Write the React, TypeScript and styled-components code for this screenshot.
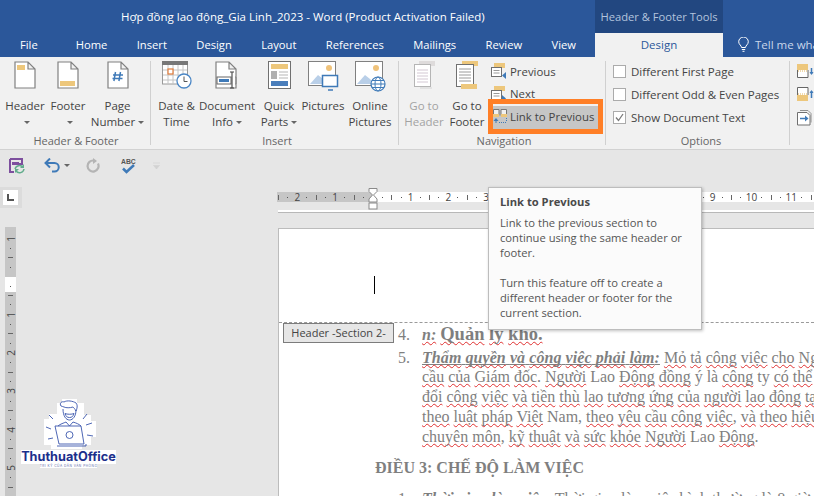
import React from "react";
import styled, { createGlobalStyle } from "styled-components";

const UI_FONT = `"Open Sans", "Noto Sans", sans-serif`;
const DOC_FONT = `"Liberation Serif", serif`;

const GlobalStyle = createGlobalStyle`
  html, body {
    margin: 0;
    padding: 0;
    background: #e6e6e6;
  }
`;

const Window = styled.div`
  position: relative;
  width: 814px;
  height: 496px;
  overflow: hidden;
  display: flex;
  flex-direction: column;
  background: #e6e6e6;
  font-family: ${UI_FONT};
  font-size: 11.5px;
  color: #444;
`;

/* ---------- title + tabs ---------- */

const TitleBar = styled.div`
  height: 33px;
  display: flex;
  background: #2b579a;
  flex: none;
`;

const Title = styled.div`
  width: 595px;
  flex: none;
  padding-left: 121px;
  box-sizing: border-box;
  line-height: 34px;
  color: #fff;
  font-size: 11.5px;
  white-space: nowrap;
`;

const ContextLabel = styled.div`
  width: 128px;
  flex: none;
  background: #224780;
  color: #b3c4dd;
  font-size: 11.2px;
  line-height: 34px;
  text-align: center;
  white-space: nowrap;
`;

const TabBar = styled.div`
  height: 24px;
  flex: none;
  display: flex;
  background: #2b579a;
  padding-left: 20px;
`;

const Tab = styled.div<{ $gap: number }>`
  margin-left: ${(p) => p.$gap}px;
  color: #fff;
  font-size: 11.2px;
  line-height: 23px;
  white-space: nowrap;
`;

const ActiveTab = styled.div`
  width: 128px;
  flex: none;
  margin-left: 19px;
  background: #f1f1f1;
  color: #2b579a;
  font-size: 11.5px;
  line-height: 24px;
  text-align: center;
`;

const TellMe = styled.div`
  margin-left: 15px;
  display: flex;
  align-items: center;
  gap: 6px;
  color: #c9d6ea;
  font-size: 11.5px;
  white-space: nowrap;
  padding-bottom: 2px;
`;

/* ---------- ribbon ---------- */

const Ribbon = styled.div`
  height: 92px;
  flex: none;
  display: flex;
  background: #f1f1f1;
  border-bottom: 1px solid #d2d2d2;
`;

const Group = styled.div<{ $width: number; $pad: number; $noRule?: boolean }>`
  width: ${(p) => p.$width}px;
  flex: none;
  box-sizing: border-box;
  margin-top: 4px;
  height: 84px;
  padding-left: ${(p) => p.$pad}px;
  border-right: ${(p) => (p.$noRule ? "none" : "1px solid #d0d0d0")};
  display: flex;
  flex-direction: column;
`;

const GroupBody = styled.div`
  height: 72px;
  flex: none;
  display: flex;
`;

const GroupLabel = styled.div`
  height: 12px;
  line-height: 15px;
  text-align: center;
  color: #666;
  font-size: 11px;
  white-space: nowrap;
`;

const BigButton = styled.div<{ $width: number; $disabled?: boolean }>`
  width: ${(p) => p.$width}px;
  flex: none;
  display: flex;
  flex-direction: column;
  align-items: center;
  color: ${(p) => (p.$disabled ? "#a3a3a3" : "#444")};
  font-size: 11.5px;
  line-height: 16px;
  white-space: nowrap;
`;

const BigIcon = styled.div`
  height: 37px;
  display: flex;
  align-items: flex-start;
  justify-content: center;
`;

const Caret = styled.span`
  display: inline-block;
  width: 0;
  height: 0;
  margin-left: 3px;
  vertical-align: 2px;
  border-left: 3px solid transparent;
  border-right: 3px solid transparent;
  border-top: 3px solid #666;
`;

const SmallColumn = styled.div`
  display: flex;
  flex-direction: column;
  margin-left: 4px;
  width: 105px;
`;

const SmallRow = styled.div<{ $active?: boolean }>`
  position: relative;
  height: 22.5px;
  box-sizing: border-box;
  padding-bottom: 2px;
  display: flex;
  align-items: center;
  gap: 3px;
  background: ${(p) => (p.$active ? "#c6c6c6" : "transparent")};
  font-size: 11.4px;
  white-space: nowrap;
  ${(p) =>
    p.$active &&
    `&::after {
      content: "";
      position: absolute;
      inset: -7px -5px -5px -5px;
      border: 5px solid #ff7f27;
      pointer-events: none;
    }`}
`;

const NavIconSlot = styled.span`
  display: flex;
  margin-left: -2px;
`;

const OptionRow = styled.div`
  height: 23px;
  box-sizing: border-box;
  padding-bottom: 2px;
  display: flex;
  align-items: center;
  gap: 5px;
  font-size: 11.5px;
  white-space: nowrap;
`;

const Checkbox = styled.span`
  width: 11px;
  height: 11px;
  flex: none;
  background: #fff;
  border: 1px solid #ababab;
  display: flex;
  align-items: center;
  justify-content: center;
`;

const IconStack = styled.div`
  display: flex;
  flex-direction: column;
  gap: 8px;
  padding-top: 3px;
`;

/* ---------- quick access ---------- */

const QuickBar = styled.div`
  height: 33px;
  flex: none;
  display: flex;
  align-items: center;
  padding-left: 9px;
  box-sizing: border-box;
  padding-bottom: 2px;
`;

const QuickItem = styled.div<{ $gap: number }>`
  margin-left: ${(p) => p.$gap}px;
  display: flex;
  align-items: center;
`;

/* ---------- workspace ---------- */

const Workspace = styled.div`
  flex: 1;
  min-height: 0;
  display: flex;
`;

const LeftRail = styled.div`
  width: 277px;
  flex: none;
  display: flex;
  flex-direction: column;
  padding-top: 4px;
  box-sizing: border-box;
`;

const CornerBox = styled.div`
  width: 22px;
  height: 21px;
  box-sizing: border-box;
  padding: 3px 4px 3px 3px;
  background: #dcdcdc;
`;

const CornerInner = styled.div`
  height: 100%;
  background: #fff;
  display: flex;
  align-items: center;
  justify-content: center;
`;

const VRuler = styled.div`
  margin: 19px 0 0 5px;
  width: 11px;
  flex: 1;
  overflow: hidden;
  padding-top: 6.6px;
  box-sizing: border-box;
  background: linear-gradient(
    to bottom,
    #c6c6c6 50px,
    #fff 50px,
    #fff 65px,
    #c6c6c6 65px
  );
  display: flex;
  flex-direction: column;
`;

const VMark = styled.div`
  flex: 0 0 9.45px;
  display: flex;
  align-items: center;
  justify-content: center;
  font-size: 10px;
  color: #444;
`;

const VNumber = styled.span`
  transform: rotate(-90deg);
  line-height: 10px;
`;

const DocColumn = styled.div`
  flex: 1;
  min-width: 0;
  display: flex;
  flex-direction: column;
`;

const RulerWrap = styled.div`
  position: relative;
  margin-top: 9px;
  height: 10px;
  flex: none;
`;

const HRuler = styled.div`
  height: 10px;
  overflow: hidden;
  display: flex;
  background: linear-gradient(to right, #c6c6c6 96px, #fff 96px);
`;

const HMark = styled.div<{ $first?: boolean }>`
  flex: 0 0 9.45px;
  margin-left: ${(p) => (p.$first ? "-3.2px" : "0")};
  display: flex;
  align-items: center;
  justify-content: center;
  font-size: 10px;
  line-height: 10px;
  color: #444;
`;

const Dot = styled.i`
  display: block;
  width: 1px;
  height: 1px;
  background: #555;
`;

const HLine = styled.i`
  display: block;
  width: 1px;
  height: 5px;
  background: #666;
`;

const VLine = styled.i`
  display: block;
  width: 5px;
  height: 1px;
  background: #666;
`;

const IndentMarker = styled.svg`
  position: absolute;
  left: 91px;
  top: -4px;
`;

const PrevPageEdge = styled.div`
  margin: 8px 0 0 1px;
  height: 3px;
  flex: none;
  background: #fff;
  border-bottom: 1px solid #b8b8b8;
  box-sizing: border-box;
`;

const Page = styled.div`
  position: relative;
  margin: 15px 0 0 1px;
  flex: 1;
  min-height: 0;
  overflow: hidden;
  background: #fff;
  border-top: 1px solid #bcbcbc;
  border-left: 1px solid #bcbcbc;
`;

const HeaderZone = styled.div`
  height: 94px;
  box-sizing: border-box;
  padding: 47px 0 0 95px;
  border-bottom: 1px dashed #9a9a9a;
`;

const TextCursor = styled.div`
  width: 1px;
  height: 18px;
  background: #000;
`;

const HeaderTag = styled.div`
  position: absolute;
  left: 4px;
  top: 94px;
  width: 111px;
  height: 20px;
  box-sizing: border-box;
  border: 1px solid #7c7c7c;
  background: #e6e6e6;
  color: #444;
  font-size: 11px;
  line-height: 18px;
  text-align: center;
  white-space: nowrap;
`;

const Body = styled.div`
  font-family: ${DOC_FONT};
  color: #7f7f7f;
  font-size: 16px;
  line-height: 19.7px;
  white-space: nowrap;
`;

const ListRow = styled.div<{ $top?: number }>`
  display: flex;
  margin: ${(p) => p.$top ?? 0}px 0 0 119px;
`;

const ListNum = styled.div`
  width: 24px;
  flex: none;
`;

const Wavy = styled.span`
  text-decoration: underline wavy #e03030;
  text-decoration-thickness: 1px;
  text-underline-offset: 1px;
  text-decoration-skip-ink: none;
`;

const Lead = styled.span`
  font-weight: bold;
  font-style: italic;
  letter-spacing: 0.07px;
  text-decoration: underline;
`;

const PlainLead = styled.span`
  font-weight: bold;
  font-style: italic;
`;

const LargeBold = styled.span`
  font-weight: bold;
  font-size: 18.5px;
`;

const BodyLine = styled.div`
  margin-left: 143px;
`;

const Heading = styled.div`
  margin: 12px 0 0 96px;
  font-weight: bold;
  font-size: 16px;
`;

/* ---------- overlays ---------- */

const Tooltip = styled.div`
  position: absolute;
  left: 488px;
  top: 187px;
  width: 214px;
  height: 143px;
  box-sizing: border-box;
  padding: 6px 10px 0 11px;
  background: #fbfbfb;
  border: 1px solid #bdbdbd;
  box-shadow: 1px 1px 3px rgba(0, 0, 0, 0.25);
  color: #555;
  font-size: 11.2px;
  line-height: 15px;
`;

const TipTitle = styled.div`
  font-weight: bold;
  margin-bottom: 6px;
  color: #4a4a4a;
`;

const TipText = styled.p`
  margin: 0 0 15px;
`;

const Watermark = styled.div`
  position: absolute;
  left: 21px;
  top: 399px;
  width: 95px;
  display: flex;
  flex-direction: column;
  align-items: center;
`;

const BrandName = styled.div`
  background: #fff;
  color: #1c2f8c;
  font-family: "Inter", sans-serif;
  font-weight: 700;
  font-size: 12.7px;
  line-height: 13px;
  padding: 0 0 1px;
  margin-top: 1px;
  white-space: nowrap;
`;

const BrandTag = styled.div`
  background: #fff;
  color: #5b6aa8;
  font-family: "Inter", sans-serif;
  font-size: 3.2px;
  line-height: 4px;
  letter-spacing: 0.5px;
  white-space: nowrap;
`;

/* ---------- icons ---------- */

const PageOutline = () => (
  <path d="M1 1h13l7 7v19H1z M14 1v7h7" fill="#fff" stroke="#808080" strokeWidth="1.2" />
);

const HeaderIcon = () => (
  <svg width="22" height="28" viewBox="0 0 22 28">
    <PageOutline />
    <rect x="3" y="4" width="8" height="5" fill="#edc77c" />
  </svg>
);

const FooterIcon = () => (
  <svg width="22" height="28" viewBox="0 0 22 28">
    <PageOutline />
    <rect x="3" y="20" width="15" height="5" fill="#edc77c" />
  </svg>
);

const PageNumberIcon = () => (
  <svg width="22" height="28" viewBox="0 0 22 28">
    <PageOutline />
    <path d="M8.5 11l-1.6 9M13.5 11l-1.6 9M6 14h10M5.500 17.500h10" stroke="#3f7ab8" strokeWidth="1.500" fill="none" />
  </svg>
);

const DateIcon = () => (
  <svg width="30" height="30" viewBox="0 0 30 30">
    <rect x="0.500" y="1" width="25" height="22" fill="#fff" stroke="#9a9a9a" />
    <rect x="0" y="0" width="26" height="4" fill="#777" />
    <path d="M1 9h24M1 14h24M1 19h24M6 4v19M11 4v19M16 4v19M21 4v19" stroke="#c4c4c4" />
    <rect x="6" y="8" width="5" height="5" fill="#fff" stroke="#e07b39" strokeWidth="1.200" />
    <circle cx="22" cy="20" r="7" fill="#fff" stroke="#4a86c5" strokeWidth="1.300" />
    <path d="M22 15.500V20.500h3.500" stroke="#555" fill="none" />
  </svg>
);

const DocInfoIcon = () => (
  <svg width="24" height="28" viewBox="0 0 24 28">
    <PageOutline />
    <rect x="2" y="16" width="14" height="7" fill="#fff" stroke="#666" />
    <rect x="4" y="18" width="10" height="3" fill="#3f7ab8" />
    <path d="M15 11h4M15 27h4M17 11v16" stroke="#444" strokeWidth="1.100" fill="none" />
    <path d="M20 16h1v7h-1" stroke="#888" fill="none" />
  </svg>
);

const QuickPartsIcon = () => (
  <svg width="23" height="28" viewBox="0 0 23 28">
    <rect x="0.500" y="0.500" width="22" height="27" fill="#fff" stroke="#707070" />
    <rect x="3" y="3" width="17" height="5" fill="#edc77c" />
    <rect x="3" y="10" width="6" height="8" fill="#b0b0b0" />
    <path d="M11 11h9M11 14h9M11 17h9" stroke="#b5b5b5" />
    <rect x="3" y="20" width="17" height="5" fill="#4a7ebb" />
  </svg>
);

const PictureBase = () => (
  <>
    <rect x="0.500" y="0.500" width="27" height="24" fill="#fff" stroke="#808080" />
    <circle cx="21" cy="7" r="3" fill="#efc27a" />
    <path d="M2 23l8-9 5 4 5 5z" fill="#b9cfe8" />
  </>
);

const PicturesIcon = () => (
  <svg width="31" height="32" viewBox="0 0 31 32">
    <PictureBase />
    <rect x="14.500" y="14.500" width="15" height="11" fill="#fff" stroke="#3f7ab8" strokeWidth="1.500" />
    <path d="M20 29h5" stroke="#3f7ab8" strokeWidth="1.500" />
  </svg>
);

const OnlinePicturesIcon = () => (
  <svg width="31" height="32" viewBox="0 0 31 32">
    <PictureBase />
    <circle cx="23" cy="23" r="7" fill="#fff" stroke="#3f7ab8" strokeWidth="1.200" />
    <ellipse cx="23" cy="23" rx="3" ry="7" fill="none" stroke="#3f7ab8" />
    <path d="M16 23h14M17 19.500h12M17 26.500h12" stroke="#3f7ab8" />
  </svg>
);

const GoToHeaderIcon = () => (
  <svg width="24" height="29" viewBox="0 0 24 29">
    <rect x="7" y="0" width="16" height="5" fill="#dedbdb" />
    <rect x="2.500" y="3.500" width="16" height="22" fill="#fff" stroke="#b5b5b5" />
    <path d="M5 9h11M5 12h11M5 15h11M5 18h11M5 21h11" stroke="#d3c8d3" />
    <rect x="8" y="26" width="12" height="2" fill="#e2e2e2" />
  </svg>
);

const GoToFooterIcon = () => (
  <svg width="24" height="29" viewBox="0 0 24 29">
    <rect x="7" y="0" width="16" height="5" fill="#edc77c" />
    <rect x="1.500" y="3.500" width="17" height="22" fill="#fff" stroke="#707070" />
    <path d="M4 8h12M4 11h12M4 14h12M4 17h12M4 20h12" stroke="#9a9a9a" />
    <rect x="6" y="23" width="16" height="5" fill="#edc77c" />
  </svg>
);

const SectionNavIcon = ({ forward }: { forward?: boolean }) => (
  <svg width="16" height="16" viewBox="0 0 16 16">
    <rect x="3" y="0" width="11" height="5" fill="#edc77c" />
    <rect x="0.500" y="4.500" width="10" height="9" fill="#fff" stroke="#707070" />
    <path d="M2.500 7.500h6M2.500 10h6" stroke="#999" />
    {forward ? (
      <path d="M11 9l4 3.500-4 3.500z" fill="#3f7ab8" />
    ) : (
      <path d="M15 9v7l-4-3.500z" fill="#3f7ab8" />
    )}
  </svg>
);

const LinkIcon = () => (
  <svg width="14" height="16" viewBox="0 0 14 16">
    <path d="M0.500 1.500h5.500v6h-5.500zM8 1.500h5.500v6H8z" fill="#f1f1f1" stroke="#777" />
    <rect x="0" y="6" width="6" height="3" fill="#edc77c" />
    <rect x="8" y="6" width="6" height="3" fill="#edc77c" />
    <path d="M6 14.500h7.500M13.500 10v4" stroke="#3f7ab8" strokeDasharray="1 1" />
    <path d="M3 10l-2.500 3h5z" fill="#3f7ab8" />
    <path d="M3 12v3" stroke="#3f7ab8" />
  </svg>
);

const CheckMark = () => (
  <svg width="9" height="9" viewBox="0 0 9 9">
    <path d="M1 4.500l2.500 3L8 1" stroke="#7a7a7a" strokeWidth="1.300" fill="none" />
  </svg>
);

const EdgeHeaderIcon = ({ up }: { up?: boolean }) => (
  <svg width="17" height="15" viewBox="0 0 17 15">
    {up ? (
      <>
        <path d="M0.500 8V0.500h10.500V8" fill="#fff" stroke="#666" />
        <rect x="0" y="8" width="11" height="6" fill="#edc77c" />
        <path d="M1 7h9" stroke="#e2b55c" strokeDasharray="1 1" />
        <path d="M14.500 4v7" stroke="#3f7ab8" strokeWidth="1.500" />
        <path d="M12.500 6l2-3 2 3z" fill="#3f7ab8" />
      </>
    ) : (
      <>
        <path d="M0.500 6v7.500h10.500V6" fill="#fff" stroke="#666" />
        <rect x="0" y="0" width="11" height="6" fill="#edc77c" />
        <path d="M1 7h9" stroke="#e2b55c" strokeDasharray="1 1" />
        <path d="M14.500 4v6" stroke="#3f7ab8" strokeWidth="1.500" />
        <path d="M12.500 8l2 3 2-3z" fill="#3f7ab8" />
      </>
    )}
  </svg>
);

const CloseHeaderIcon = () => (
  <svg width="15" height="16" viewBox="0 0 15 16">
    <path d="M0.500 2.500h9.500l3 3v9.500H0.500z" fill="#fff" stroke="#707070" />
    <path d="M3 0.500h8l3 3v9" fill="none" stroke="#909090" />
    <path d="M3 8.500h6" stroke="#3f7ab8" strokeWidth="1.500" />
    <path d="M8 5.500l3.500 3-3.500 3z" fill="#3f7ab8" />
  </svg>
);

const BulbIcon = () => (
  <svg width="11" height="15" viewBox="0 0 11 15">
    <path
      d="M3.500 10.500c0-2-2.800-3-2.800-5.700a4.800 4.800 0 0 1 9.600 0c0 2.700-2.800 3.700-2.800 5.700zM3.800 12.500h3.400M4.500 14.300h2"
      fill="none"
      stroke="#fff"
    />
  </svg>
);

const SaveIcon = () => (
  <svg width="16" height="16" viewBox="0 0 16 16">
    <path d="M1 1h12v5H10M1 1v13h4" fill="none" stroke="#7d4f9e" strokeWidth="2" />
    <rect x="3" y="4" width="7" height="3" fill="#7d4f9e" />
    <path d="M6 11a4.500 4.500 0 0 1 8-1.500M15 11a4.500 4.500 0 0 1-8 2" fill="none" stroke="#62ad8c" strokeWidth="1.500" />
    <path d="M15 6v4h-4zM6 15v-4h4z" fill="#62ad8c" />
  </svg>
);

const UndoIcon = () => (
  <svg width="17" height="15" viewBox="0 0 17 15">
    <path d="M2 5h8.500a4.200 4.200 0 0 1 0 8.500H8" fill="none" stroke="#3f7ab8" strokeWidth="2" />
    <path d="M6 0.500L1.500 5 6 9.500" fill="none" stroke="#3f7ab8" strokeWidth="2" />
  </svg>
);

const RedoIcon = () => (
  <svg width="14" height="15" viewBox="0 0 14 15">
    <path d="M8 2.600a5.500 5.500 0 1 0 4 3" fill="none" stroke="#b4b4b4" strokeWidth="2.200" />
    <path d="M7 0v6l4-3z" fill="#b4b4b4" />
  </svg>
);

const SpellIcon = () => (
  <svg width="15" height="17" viewBox="0 0 15 17">
    <text x="0" y="6.500" fontFamily="Liberation Sans, sans-serif" fontWeight="700" fontSize="6.800" fill="#555">
      ABC
    </text>
    <path d="M2 11.500l3.500 3.500L13 8" fill="none" stroke="#3f7ab8" strokeWidth="2.500" />
  </svg>
);

const CustomizeIcon = () => (
  <svg width="7" height="8" viewBox="0 0 7 8">
    <path d="M0 1h7M0.500 3.500h6l-3 3.500z" fill="#d2d2d2" stroke="#d2d2d2" strokeWidth="0.600" />
  </svg>
);

const LeftTabIcon = () => (
  <svg width="7" height="7" viewBox="0 0 7 7">
    <path d="M1 0v6h6" fill="none" stroke="#555" strokeWidth="2" />
  </svg>
);

const PersonLogo = () => (
  <svg width="54" height="50" viewBox="0 0 54 50">
    <path d="M20 0h15v4h7v12h7v6h5v16h-5v8h-9v4H9v-4H2V20h5v-5h8V4h5z" fill="#fff" />
    <g fill="none" stroke="#3a56ad" strokeWidth="0.900">
      <path d="M19 7c-2-3 1-5 3-4 3-2 9-1 12 1 2 2 1 6 0 8-1-2-2-3-3-4-3 1-7 1-9 0-1 0-2-1-3-1z" />
      <path d="M21 10c0 7 3 11 6.500 11S34 17 34 11" />
      <path d="M23 14.500c2 1 7 1 9 0-1 3-2 4-4.500 4s-3.500-1-4.500-4z" />
      <path d="M16 27c2-2 6-3 8-4l3.500 4 3.500-4c3 1 6 2 8 4" />
      <path d="M13 27h26l3 18H17z" />
      <circle cx="27.500" cy="36" r="3.500" />
      <path d="M15 47h29v-2" />
      <path d="M7 16l4 4M4 28l5 2M6 40l5-1M45 15l-4 5M50 24l-6 2M51 37l-6-1" />
    </g>
  </svg>
);

/* ---------- ruler data ---------- */

type Mark = { kind: "num" | "dot" | "line" | "blank"; label?: string };

// one step per quarter centimetre
const buildMarks = (from: number, to: number): Mark[] => {
  const marks: Mark[] = [];
  for (let i = from; i <= to; i++) {
    if (i === 0) marks.push({ kind: "blank" });
    else if (i % 4 === 0) marks.push({ kind: "num", label: String(Math.abs(i) / 4) });
    else if (i % 2 === 0) marks.push({ kind: "line" });
    else marks.push({ kind: "dot" });
  }
  return marks;
};

const horizontalMarks = buildMarks(-10, 58);
const verticalMarks = buildMarks(-4, 24);

const App = () => {
  return (
    <Window>
      <GlobalStyle />
      <TitleBar>
        <Title>Hợp đồng lao động_Gia Linh_2023 - Word (Product Activation Failed)</Title>
        <ContextLabel>Header &amp; Footer Tools</ContextLabel>
      </TitleBar>
      <TabBar>
        <Tab $gap={0}>File</Tab>
        <Tab $gap={38}>Home</Tab>
        <Tab $gap={29.4}>Insert</Tab>
        <Tab $gap={29.4}>Design</Tab>
        <Tab $gap={29.4}>Layout</Tab>
        <Tab $gap={29.4}>References</Tab>
        <Tab $gap={29.4}>Mailings</Tab>
        <Tab $gap={29.4}>Review</Tab>
        <Tab $gap={29.4}>View</Tab>
        <ActiveTab>Design</ActiveTab>
        <TellMe>
          <BulbIcon />
          Tell me what you want to do
        </TellMe>
      </TabBar>

      <Ribbon>
        <Group $width={151} $pad={2}>
          <GroupBody>
            <BigButton $width={46}>
              <BigIcon><HeaderIcon /></BigIcon>
              Header
              <span><Caret /></span>
            </BigButton>
            <BigButton $width={40}>
              <BigIcon><FooterIcon /></BigIcon>
              Footer
              <span><Caret /></span>
            </BigButton>
            <BigButton $width={59}>
              <BigIcon><PageNumberIcon /></BigIcon>
              Page
              <span>Number<Caret /></span>
            </BigButton>
          </GroupBody>
          <GroupLabel>Header &amp; Footer</GroupLabel>
        </Group>

        <Group $width={248} $pad={5}>
          <GroupBody>
            <BigButton $width={41}>
              <BigIcon><DateIcon /></BigIcon>
              Date &amp;
              <span>Time</span>
            </BigButton>
            <BigButton $width={60}>
              <BigIcon><DocInfoIcon /></BigIcon>
              Document
              <span>Info<Caret /></span>
            </BigButton>
            <BigButton $width={44}>
              <BigIcon><QuickPartsIcon /></BigIcon>
              Quick
              <span>Parts<Caret /></span>
            </BigButton>
            <BigButton $width={44}>
              <BigIcon><PicturesIcon /></BigIcon>
              Pictures
            </BigButton>
            <BigButton $width={50}>
              <BigIcon><OnlinePicturesIcon /></BigIcon>
              Online
              <span>Pictures</span>
            </BigButton>
          </GroupBody>
          <GroupLabel>Insert</GroupLabel>
        </Group>

        <Group $width={207} $pad={4}>
          <GroupBody>
            <BigButton $width={42} $disabled>
              <BigIcon><GoToHeaderIcon /></BigIcon>
              Go to
              <span>Header</span>
            </BigButton>
            <BigButton $width={44}>
              <BigIcon><GoToFooterIcon /></BigIcon>
              Go to
              <span>Footer</span>
            </BigButton>
            <SmallColumn>
              <SmallRow><NavIconSlot><SectionNavIcon /></NavIconSlot>Previous</SmallRow>
              <SmallRow><NavIconSlot><SectionNavIcon forward /></NavIconSlot>Next</SmallRow>
              <SmallRow $active><LinkIcon />Link to Previous</SmallRow>
            </SmallColumn>
          </GroupBody>
          <GroupLabel>Navigation</GroupLabel>
        </Group>

        <Group $width={184} $pad={7}>
          <GroupBody>
            <div>
              <OptionRow><Checkbox />Different First Page</OptionRow>
              <OptionRow><Checkbox />Different Odd &amp; Even Pages</OptionRow>
              <OptionRow><Checkbox><CheckMark /></Checkbox>Show Document Text</OptionRow>
            </div>
          </GroupBody>
          <GroupLabel>Options</GroupLabel>
        </Group>

        <Group $width={24} $pad={7} $noRule>
          <IconStack>
            <EdgeHeaderIcon />
            <EdgeHeaderIcon up />
            <CloseHeaderIcon />
          </IconStack>
        </Group>
      </Ribbon>

      <QuickBar>
        <QuickItem $gap={0}><SaveIcon /></QuickItem>
        <QuickItem $gap={19}><UndoIcon /><Caret /></QuickItem>
        <QuickItem $gap={16}><RedoIcon /></QuickItem>
        <QuickItem $gap={21}><SpellIcon /></QuickItem>
        <QuickItem $gap={17}><CustomizeIcon /></QuickItem>
      </QuickBar>

      <Workspace>
        <LeftRail>
          <CornerBox>
            <CornerInner><LeftTabIcon /></CornerInner>
          </CornerBox>
          <VRuler>
            {verticalMarks.map((m, i) => (
              <VMark key={i}>
                {m.kind === "num" && <VNumber>{m.label}</VNumber>}
                {m.kind === "dot" && <Dot />}
                {m.kind === "line" && <VLine />}
              </VMark>
            ))}
          </VRuler>
        </LeftRail>

        <DocColumn>
          <RulerWrap>
            <HRuler>
              {horizontalMarks.map((m, i) => (
                <HMark key={i} $first={i === 0}>
                  {m.kind === "num" && m.label}
                  {m.kind === "dot" && <Dot />}
                  {m.kind === "line" && <HLine />}
                </HMark>
              ))}
            </HRuler>
            <IndentMarker width="10" height="22" viewBox="0 0 10 22">
              <path d="M1 0.500h8v3l-3.500 3.500 3.500 4v3H1v-3l3.500-4L1 3.500z" fill="#fff" stroke="#8a8a8a" />
              <rect x="1" y="15" width="8" height="6" fill="#fff" stroke="#8a8a8a" />
            </IndentMarker>
          </RulerWrap>
          <PrevPageEdge />
          <Page>
            <HeaderZone>
              <TextCursor />
            </HeaderZone>
            <HeaderTag>Header -Section 2-</HeaderTag>
            <Body>
              <ListRow $top={2}>
                <ListNum>4.</ListNum>
                <div>
                  <Wavy><PlainLead>n:</PlainLead></Wavy> <LargeBold><Wavy>Quản</Wavy> <Wavy>lý</Wavy> <Wavy>kho.</Wavy></LargeBold>
                </div>
              </ListRow>
              <ListRow $top={3}>
                <ListNum>5.</ListNum>
                <div>
                  <Lead>
                    <Wavy>Thẩm</Wavy> <Wavy>quyền</Wavy> <Wavy>và</Wavy> <Wavy>công</Wavy> <Wavy>việc</Wavy>{" "}
                    <Wavy>phải</Wavy> <Wavy>làm</Wavy>:
                  </Lead>{" "}
                  <Wavy>Mỏ</Wavy> <Wavy>tả</Wavy> <Wavy>công</Wavy> <Wavy>việc</Wavy> <Wavy>cho</Wavy> <Wavy>Người</Wavy>
                </div>
              </ListRow>
              <BodyLine>
                <Wavy>cầu</Wavy> <Wavy>của</Wavy> <Wavy>Giám</Wavy> <Wavy>đốc</Wavy>. <Wavy>Người</Wavy> Lao{" "}
                <Wavy>Động</Wavy> <Wavy>đồng</Wavy> ý là <Wavy>công</Wavy> ty <Wavy>có</Wavy> <Wavy>thể</Wavy>
              </BodyLine>
              <BodyLine>
                <Wavy>đổi</Wavy> <Wavy>công</Wavy> <Wavy>việc</Wavy> <Wavy>và</Wavy> <Wavy>tiền</Wavy> <Wavy>thù</Wavy>{" "}
                <Wavy>lao</Wavy> <Wavy>tương</Wavy> <Wavy>ứng</Wavy> <Wavy>của</Wavy> <Wavy>người</Wavy> <Wavy>lao</Wavy>{" "}
                <Wavy>động</Wavy> <Wavy>tại</Wavy>
              </BodyLine>
              <BodyLine>
                <Wavy>theo</Wavy> <Wavy>luật</Wavy> <Wavy>pháp</Wavy> <Wavy>Việt</Wavy> Nam, <Wavy>theo</Wavy>{" "}
                <Wavy>yêu</Wavy> <Wavy>cầu</Wavy> <Wavy>công</Wavy> <Wavy>việc</Wavy>, <Wavy>và</Wavy> <Wavy>theo</Wavy>{" "}
                <Wavy>hiệu</Wavy>
              </BodyLine>
              <BodyLine>
                <Wavy>chuyên</Wavy> <Wavy>môn</Wavy>, <Wavy>kỹ</Wavy> <Wavy>thuật</Wavy> <Wavy>và</Wavy> <Wavy>sức</Wavy>{" "}
                <Wavy>khỏe</Wavy> <Wavy>Người</Wavy> Lao <Wavy>Động</Wavy>.
              </BodyLine>
              <Heading>ĐIỀU 3: CHẾ ĐỘ LÀM VIỆC</Heading>
              <ListRow $top={11}>
                <ListNum>1.</ListNum>
                <div>
                  <PlainLead>Thời gian làm việc:</PlainLead> Thời gian làm việc bình thường là 8 giờ
                </div>
              </ListRow>
            </Body>
          </Page>
        </DocColumn>
      </Workspace>

      <Tooltip>
        <TipTitle>Link to Previous</TipTitle>
        <TipText>
          Link to the previous section to
          <br />
          continue using the same header or
          <br />
          footer.
        </TipText>
        <TipText>
          Turn this feature off to create a
          <br />
          different header or footer for the
          <br />
          current section.
        </TipText>
      </Tooltip>

      <Watermark>
        <PersonLogo />
        <BrandName>ThuthuatOffice</BrandName>
        <BrandTag>TRI KỶ CỦA DÂN VĂN PHÒNG</BrandTag>
      </Watermark>
    </Window>
  );
};

export default App;
